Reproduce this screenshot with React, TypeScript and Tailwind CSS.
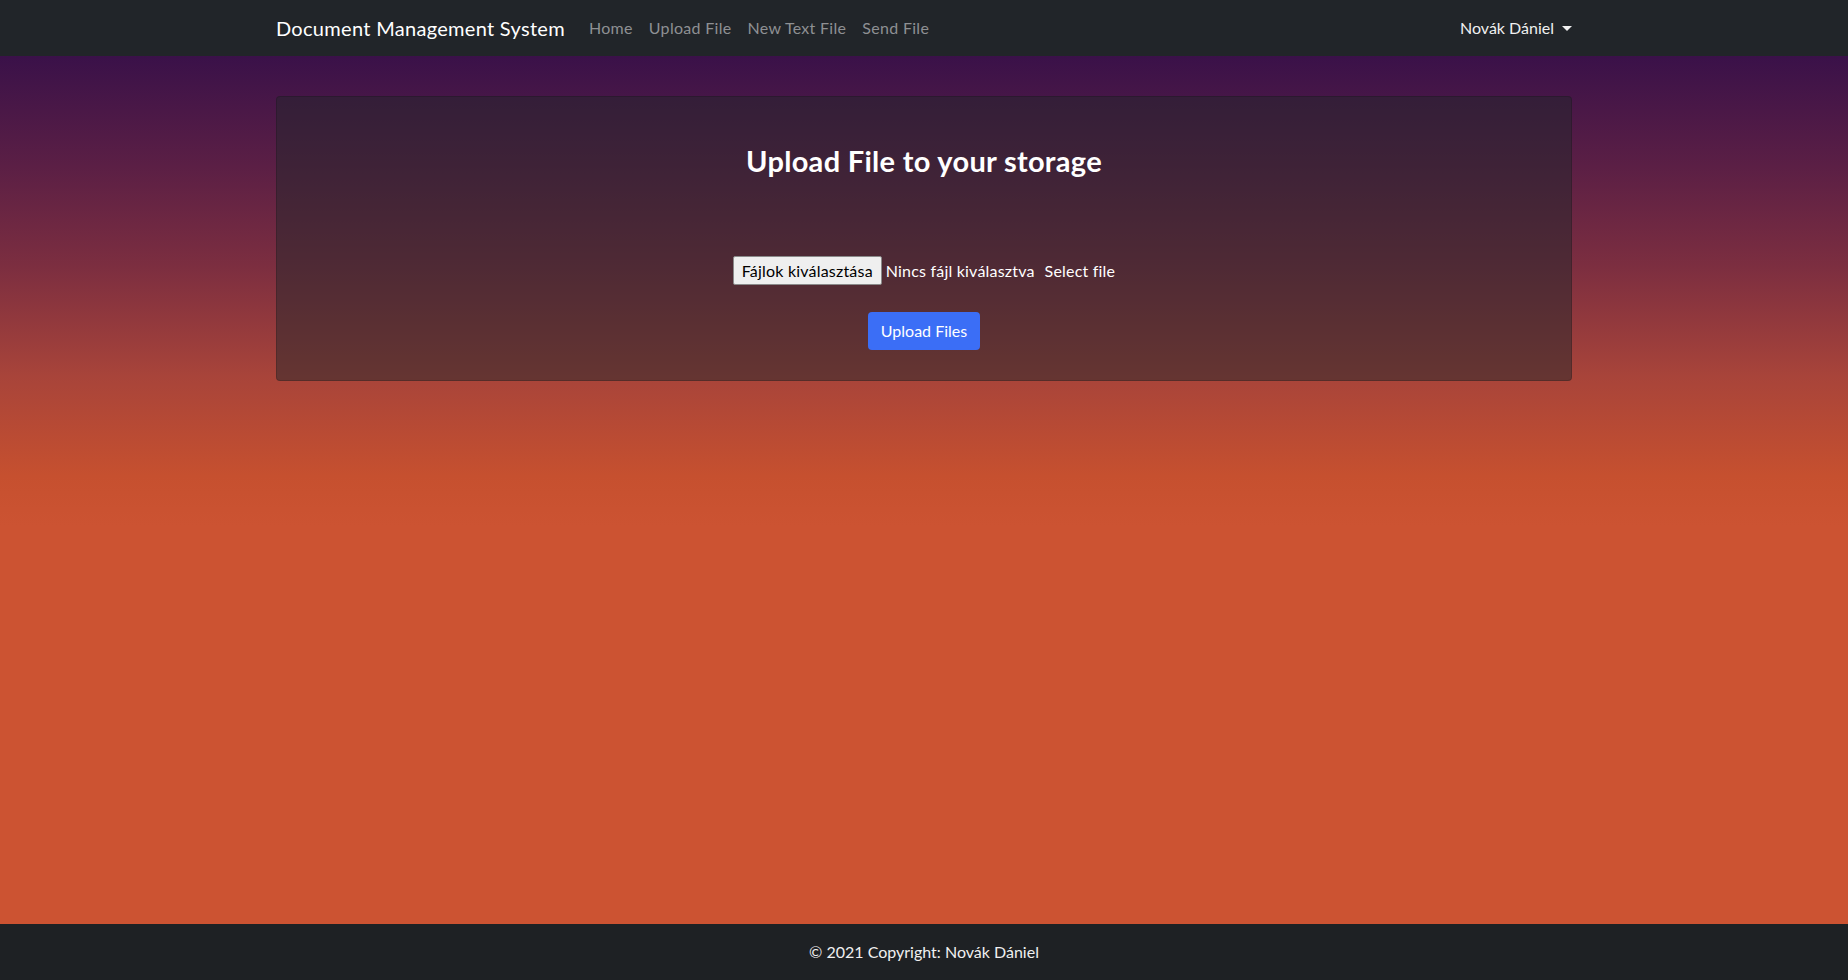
import React from "react";

export default function App() {
  const font = { fontFamily: "Lato, 'Liberation Sans', sans-serif" };
  return (
    <div
      className="min-h-screen flex flex-col text-white"
      style={font}
    >
      <nav className="h-[56px] bg-[#212529] flex items-center shrink-0">
        <div className="w-[1296px] mx-auto flex items-center">
          <span className="text-[20px] text-white mr-[16px] tracking-[0.3px]">Document Management System</span>
          <a className="px-[8px] text-[16px] text-[#8e9093] tracking-[0.3px]">Home</a>
          <a className="px-[8px] text-[16px] text-[#8e9093] tracking-[0.3px]">Upload File</a>
          <a className="px-[8px] text-[16px] text-[#8e9093] tracking-[0.3px]">New Text File</a>
          <a className="px-[8px] text-[16px] text-[#8e9093] tracking-[0.3px]">Send File</a>
          <div className="ml-auto flex items-center text-[16px] text-[#f0f0f0]">
            <span>Novák Dániel</span>
            <span className="ml-[8px] w-0 h-0 border-l-[5px] border-r-[5px] border-t-[5px] border-l-transparent border-r-transparent border-t-[#f0f0f0]"></span>
          </div>
        </div>
      </nav>
      <main className="flex-1 bg-[linear-gradient(180deg,#3a1149_0px,#5b1f45_110px,#7c2e40_210px,#a8443a_320px,#c6502f_420px,#cc5332_470px,#cc5332_100%)]">
        <div className="w-[1296px] mx-auto mt-[40px] rounded-[4px] bg-[rgba(33,37,41,0.5)] border border-[rgba(0,0,0,0.15)] pt-[47px] pb-[30px] flex flex-col items-center">
          <h3 className="text-[29px] font-bold leading-[34px] text-white tracking-[0.3px]">Upload File to your storage</h3>
          <div className="mt-[78px] flex items-center text-[16px] tracking-[0.2px]">
            <span className="h-[29px] px-[8px] flex items-center bg-[#efefef] text-black border border-[#8a8a8a] rounded-[2px]">Fájlok kiválasztása</span>
            <span className="ml-[4px]">Nincs fájl kiválasztva</span>
            <span className="ml-[10px]">Select file</span>
          </div>
          <button className="mt-[27px] h-[38px] px-[13px] rounded-[4px] bg-[#3b6ef6] text-white text-[16px]">Upload Files</button>
        </div>
      </main>
      <footer className="h-[56px] bg-[#1e2124] flex items-center justify-center text-[16px] text-[#f0f0f0] shrink-0">
        © 2021 Copyright: Novák Dániel
      </footer>
    </div>
  );
}
